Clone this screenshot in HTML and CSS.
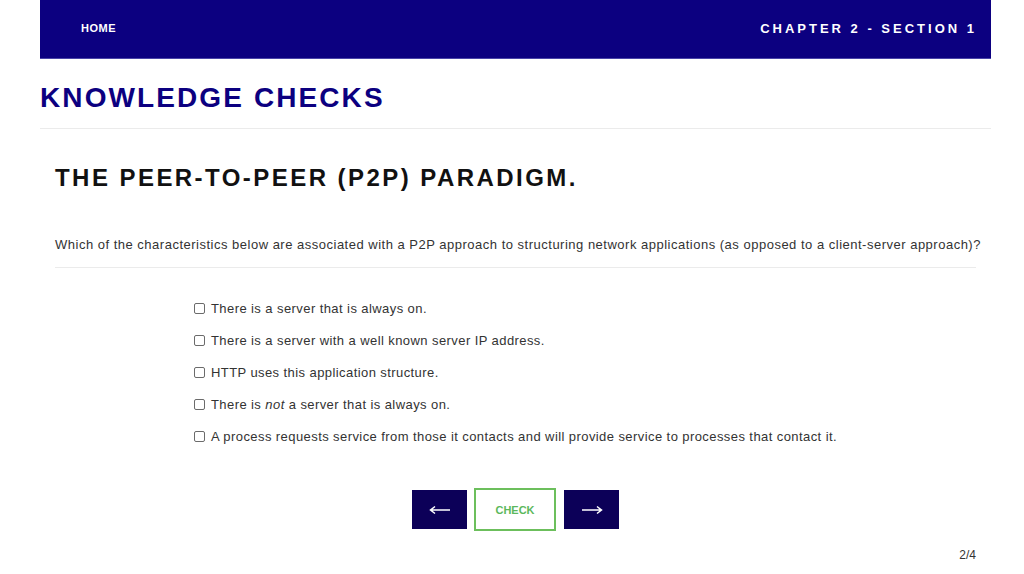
FILE: index.html
```html
<!DOCTYPE html>
<html lang="en">
<head>
<meta charset="utf-8">
<title>Knowledge Checks</title>
<link rel="stylesheet" href="styles.css">
</head>
<body>
<div class="page">
  <header class="topbar">
    <span class="home">HOME</span>
    <span class="chapter">CHAPTER 2 - SECTION 1</span>
  </header>
  <h1 class="title">KNOWLEDGE CHECKS</h1>
  <hr class="rule">
  <main class="content">
    <h2 class="subtitle">THE PEER-TO-PEER (P2P) PARADIGM.</h2>
    <p class="question">Which of the characteristics below are associated with a P2P approach to structuring network applications (as opposed to a client-server approach)?</p>
    <hr class="rule">
    <div class="options-wrap">
      <ul class="options">
        <li class="option"><span class="box"></span><span>There is a server that is always on.</span></li>
        <li class="option"><span class="box"></span><span>There is a server with a well known server IP address.</span></li>
        <li class="option"><span class="box"></span><span>HTTP uses this application structure.</span></li>
        <li class="option"><span class="box"></span><span>There is <em>not</em> a server that is always on.</span></li>
        <li class="option"><span class="box"></span><span>A process requests service from those it contacts and will provide service to processes that contact it.</span></li>
      </ul>
    </div>
    <div class="actions">
      <button class="nav" aria-label="Previous"><svg width="22" height="10" viewBox="0 0 22 10"><path d="M21 5H2M6 1.5L1.5 5L6 8.5" fill="none" stroke="#fff" stroke-width="1.5"/></svg></button>
      <button class="check">CHECK</button>
      <button class="nav" aria-label="Next"><svg width="22" height="10" viewBox="0 0 22 10"><path d="M1 5H20M16 1.5L20.5 5L16 8.5" fill="none" stroke="#fff" stroke-width="1.5"/></svg></button>
    </div>
    <div class="pager">2/4</div>
  </main>
</div>
</body>
</html>
```
FILE: styles.css
```css
html, body {
  margin: 0;
  padding: 0;
  background: #fff;
}
body {
  font-family: "Liberation Sans", Arial, sans-serif;
  color: #333;
}
.page {
  margin-left: 40px;
  width: 951px;
}
.topbar {
  height: 59px;
  background: #0c0080;
  display: flex;
  align-items: center;
  justify-content: space-between;
  padding: 0 14px 0 41px;
  box-sizing: border-box;
  color: #fff;
  font-weight: bold;
  border-bottom: 1px solid #4a44a8;
}
.home {
  font-size: 11px;
  letter-spacing: 0.5px;
  margin-top: -2px;
}
.chapter {
  font-size: 13px;
  letter-spacing: 3px;
  margin-top: -1px;
}
.title {
  margin: 23px 0 0;
  font-size: 28px;
  line-height: 32px;
  letter-spacing: 2.1px;
  color: #0c0080;
  font-weight: bold;
}
.rule {
  border: 0;
  border-top: 1px solid #ebebeb;
  margin: 14px 0 0;
  height: 0;
}
.content {
  padding: 0 15px;
}
.content .rule {
  margin-top: 13px;
}
.subtitle {
  margin: 35px 0 0;
  font-size: 24px;
  line-height: 28px;
  letter-spacing: 2.45px;
  color: #111;
  font-weight: bold;
}
.question {
  margin: 44px 0 0;
  font-size: 13px;
  line-height: 18px;
  letter-spacing: 0.5px;
  white-space: nowrap;
}
.options-wrap {
  text-align: center;
  margin-top: 24px;
}
.options {
  display: inline-block;
  text-align: left;
  list-style: none;
  margin: 0;
  padding: 0;
}
.option {
  display: flex;
  align-items: center;
  height: 32px;
  font-size: 13px;
  letter-spacing: 0.42px;
}
.box {
  width: 9px;
  height: 9px;
  border: 1px solid #6b6b6b;
  border-radius: 2px;
  margin-right: 6px;
  flex: none;
}
.actions {
  display: flex;
  justify-content: center;
  align-items: center;
  gap: 7px;
  margin-top: 36px;
}
.nav {
  width: 55px;
  height: 39px;
  background: #0c0058;
  border: 0;
  padding: 0;
  display: flex;
  align-items: center;
  justify-content: center;
}
.check {
  width: 82px;
  height: 43px;
  background: #fff;
  border: 2px solid #6cbf5c;
  color: #5cb85c;
  font-family: "Liberation Sans", Arial, sans-serif;
  font-weight: bold;
  font-size: 11px;
  padding: 0;
  margin-right: 1px;
}
.pager {
  text-align: right;
  font-size: 12px;
  line-height: 16px;
  margin-top: 16px;
  color: #333;
}
```
